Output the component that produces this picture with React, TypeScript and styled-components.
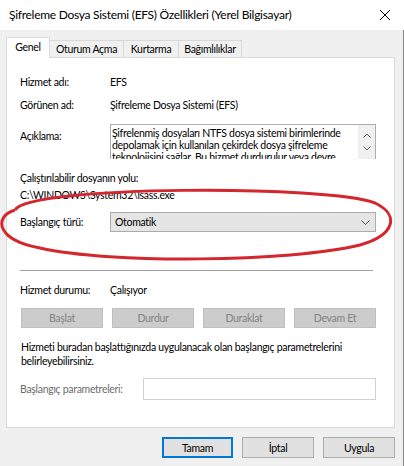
import styled, { createGlobalStyle } from 'styled-components'

const GlobalStyle = createGlobalStyle`
  html, body {
    margin: 0;
    padding: 0;
    background: #f0f0f0;
  }
  body {
    font-family: Lato, "Liberation Sans", sans-serif;
    color: #000;
  }
  * { box-sizing: border-box; }
`

const tabs = [
    { name: 'Genel', width: 44 },
    { name: 'Oturum Açma', width: 75 },
    { name: 'Kurtarma', width: 56 },
    { name: 'Bağımlılıklar', width: 64 },
]
const actions = ['Başlat', 'Durdur', 'Duraklat', 'Devam Et']

export default function App() {
    return (
        <Window>
            <GlobalStyle />
            <TitleBar>
                <span>Şifreleme Dosya Sistemi (EFS) Özellikleri (Yerel Bilgisayar)</span>
                <svg width="12" height="12" viewBox="0 0 12 12">
                    <path d="M1 1 L11 11 M11 1 L1 11" stroke="#000" strokeWidth="1" />
                </svg>
            </TitleBar>
            <Body>
                <TabStrip>
                    {tabs.map((t, i) => (
                        <Tab key={t.name} $active={i === 0} $width={t.width}>{t.name}</Tab>
                    ))}
                </TabStrip>
                <Panel>
                    <Row $mt={17}>
                        <Label>Hizmet adı:</Label>
                        <Value>EFS</Value>
                    </Row>
                    <Row $mt={9}>
                        <Label>Görünen ad:</Label>
                        <Value>Şifreleme Dosya Sistemi (EFS)</Value>
                    </Row>
                    <DescRow>
                        <Label>Açıklama:</Label>
                        <DescBox>
                            <DescText>
                                Şifrelenmiş dosyaları NTFS dosya sistemi birimlerinde depolamak için kullanılan çekirdek dosya şifreleme teknolojisini sağlar. Bu hizmet durdurulur veya devre dışı bırakılırsa, uygulamalar şifrelenmiş dosyalara erişemez.
                            </DescText>
                            <ScrollCol>
                                <svg width="8" height="5" viewBox="0 0 8 5">
                                    <path d="M0.5 4.5 L4 1 L7.5 4.5" stroke="#606060" fill="none" />
                                </svg>
                                <svg width="8" height="5" viewBox="0 0 8 5">
                                    <path d="M0.5 0.5 L4 4 L7.5 0.5" stroke="#606060" fill="none" />
                                </svg>
                            </ScrollCol>
                        </DescBox>
                    </DescRow>
                    <Line $mt={12}>Çalıştırılabilir dosyanın yolu:</Line>
                    <Line $mt={3}>C:\WINDOWS\System32\lsass.exe</Line>
                    <ComboRow>
                        <Label>Başlangıç türü:</Label>
                        <Combo>
                            <span>Otomatik</span>
                            <svg width="9" height="5" viewBox="0 0 9 5">
                                <path d="M0.5 0.5 L4.5 4.5 L8.5 0.5" stroke="#555" fill="none" />
                            </svg>
                        </Combo>
                    </ComboRow>
                    <Separator />
                    <Row $mt={12}>
                        <Label>Hizmet durumu:</Label>
                        <Value>Çalışıyor</Value>
                    </Row>
                    <ActionBar>
                        {actions.map((a) => (
                            <DisabledButton key={a}>{a}</DisabledButton>
                        ))}
                    </ActionBar>
                    <Note>
                        Hizmeti buradan başlattığınızda uygulanacak olan başlangıç parametrelerini belirleyebilirsiniz.
                    </Note>
                    <ParamRow>
                        <ParamLabel>Başlangıç parametreleri:</ParamLabel>
                        <ParamInput />
                    </ParamRow>
                </Panel>
                <Footer>
                    <DialogButton $primary>Tamam</DialogButton>
                    <DialogButton>İptal</DialogButton>
                    <DialogButton>Uygula</DialogButton>
                </Footer>
            </Body>
            <Annotation viewBox="0 0 404 466" width="404" height="466">
                <path
                    d="M 15 210 C 30 185, 330 185, 375 203 C 400 215, 395 235, 360 245 C 290 262, 110 264, 40 248 C -5 240, -6 216, 15 210"
                    stroke="#d3262d"
                    strokeWidth="3"
                    fill="none"
                />
            </Annotation>
        </Window>
    )
}

const Window = styled.div`
    position: relative;
    width: 404px;
    height: 466px;
    display: flex;
    flex-direction: column;
    background: #f0f0f0;
    overflow: hidden;
    font-size: 10.5px;
    letter-spacing: -0.3px;
    line-height: 14px;
`

const TitleBar = styled.div`
    height: 30px;
    background: #fff;
    display: flex;
    align-items: center;
    justify-content: space-between;
    padding: 0 13px 0 9px;
    font-size: 12px;
    letter-spacing: -0.28px;
`

const Body = styled.div`
    flex: 1;
    display: flex;
    flex-direction: column;
    padding: 7px 8px 0 6px;
    border-right: 1px solid #8a8a8a;
`

const TabStrip = styled.div`
    height: 20px;
    display: flex;
    align-items: flex-end;
    padding-left: 1px;
    position: relative;
    z-index: 1;
`

const Tab = styled.div<{ $active?: boolean; $width: number }>`
    width: ${(p) => p.$width}px;
    height: ${(p) => (p.$active ? '21px' : '17px')};
    margin-bottom: ${(p) => (p.$active ? '-1px' : '0')};
    padding-top: ${(p) => (p.$active ? '2px' : '1px')};
    margin-left: -1px;
    border: 1px solid #d9d9d9;
    border-bottom: none;
    background: ${(p) => (p.$active ? '#fff' : '#f0f0f0')};
    text-align: center;
    white-space: nowrap;
`

const Panel = styled.div`
    height: 371px;
    background: #fff;
    border: 1px solid #d9d9d9;
    padding: 0 18px 0 13px;
    display: flex;
    flex-direction: column;
`

const Row = styled.div<{ $mt: number }>`
    display: flex;
    margin-top: ${(p) => p.$mt}px;
`

const Label = styled.div`
    width: 90px;
    flex-shrink: 0;
`

const Value = styled.div`
    white-space: nowrap;
`

const DescRow = styled.div`
    display: flex;
    margin-top: 12px;
    & > ${Label} {
        padding-top: 5px;
    }
`

const DescBox = styled.div`
    flex: 1;
    height: 35px;
    display: flex;
    border: 1px solid #abadb3;
    border-bottom: none;
    overflow: hidden;
`

const DescText = styled.div`
    flex: 1;
    padding: 2px 10px 0 1px;
    line-height: 12px;
`

const ScrollCol = styled.div`
    width: 17px;
    background: #f0f0f0;
    display: flex;
    flex-direction: column;
    align-items: center;
    justify-content: space-around;
    padding: 4px 0 4px;
`

const Line = styled.div<{ $mt: number }>`
    margin-top: ${(p) => p.$mt}px;
    white-space: nowrap;
`

const ComboRow = styled.div`
    display: flex;
    align-items: center;
    margin-top: 10px;
`

const Combo = styled.div`
    flex: 1;
    height: 20px;
    background: #e5e5e5;
    border: 1px solid #acacac;
    display: flex;
    align-items: center;
    justify-content: space-between;
    padding: 0 5px 0 4px;
`

const Separator = styled.div`
    height: 1px;
    background: #a0a0a0;
    margin: 38px 3px 0 0;
`

const ActionBar = styled.div`
    display: flex;
    justify-content: space-between;
    margin-top: 11px;
    padding-left: 1px;
`

const DisabledButton = styled.div`
    width: 82px;
    height: 20px;
    background: #cccccc;
    border: 1px solid #bfbfbf;
    color: #838383;
    display: flex;
    align-items: center;
    justify-content: center;
`

const Note = styled.div`
    margin-top: 12px;
    padding-left: 1px;
`

const ParamRow = styled.div`
    display: flex;
    align-items: center;
    margin-top: 10px;
`

const ParamLabel = styled.div`
    width: 123px;
    color: #6d6d6d;
    white-space: nowrap;
`

const ParamInput = styled.div`
    flex: 1;
    height: 22px;
    border: 1px solid #d0d0d0;
    background: #fff;
`

const Footer = styled.div`
    display: flex;
    justify-content: flex-end;
    gap: 9px;
    padding-top: 9px;
`

const DialogButton = styled.div<{ $primary?: boolean }>`
    width: ${(p) => (p.$primary ? '71px' : '72px')};
    height: 21px;
    background: #e1e1e1;
    border: ${(p) => (p.$primary ? '2px solid #0078d7' : '1px solid #adadad')};
    display: flex;
    align-items: center;
    justify-content: center;
`

const Annotation = styled.svg`
    position: absolute;
    left: 0;
    top: 0;
    pointer-events: none;
`
